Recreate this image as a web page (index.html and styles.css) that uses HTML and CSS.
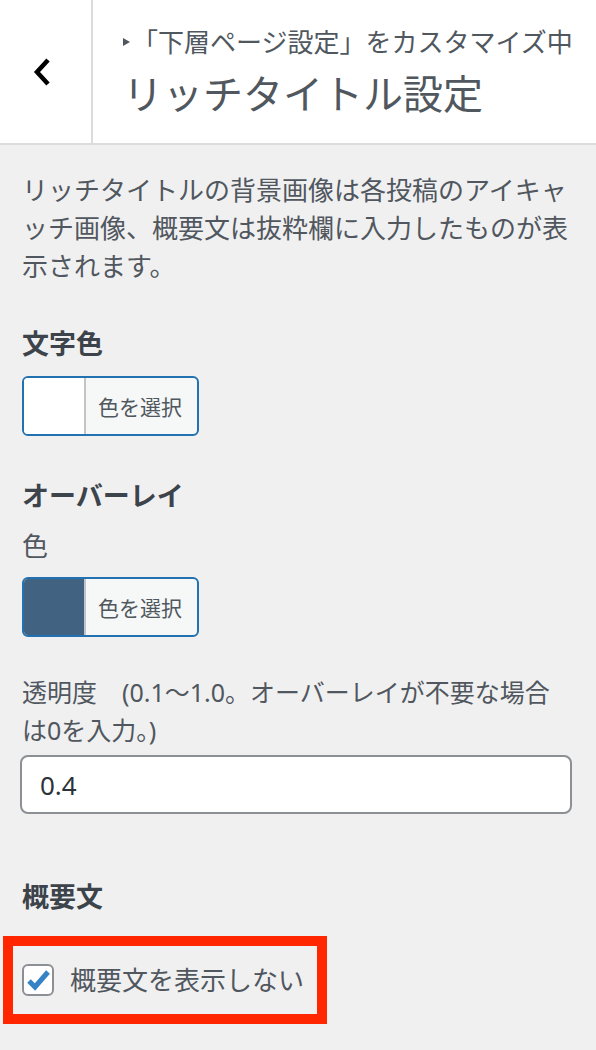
FILE: index.html
```html
<!DOCTYPE html>
<html lang="ja">
<head>
  <meta charset="UTF-8">
  <title>リッチタイトル設定</title>
  <link rel="stylesheet" href="styles.css">
</head>
<body>
  <div class="panel">
    <div class="panel-head">
      <button class="back" type="button" aria-label="戻る">
        <svg width="20" height="30" viewBox="0 0 20 30">
          <path d="M15 3 L4 15 L15 27" fill="none" stroke="#000" stroke-width="4.5"/>
        </svg>
      </button>
      <div class="head-text">
        <div class="crumb"><span class="tri"></span>「下層ページ設定」をカスタマイズ中</div>
        <h1>リッチタイトル設定</h1>
      </div>
    </div>

    <div class="panel-body">
      <p class="desc">リッチタイトルの背景画像は各投稿のアイキャッチ画像、概要文は抜粋欄に入力したものが表示されます。</p>

      <h2 class="control-title first">文字色</h2>
      <button class="color-btn" type="button">
        <span class="swatch" style="background:#ffffff"></span>
        <span class="pick">色を選択</span>
      </button>

      <h2 class="control-title">オーバーレイ</h2>
      <div class="sub-label">色</div>
      <button class="color-btn" type="button">
        <span class="swatch" style="background:#416280"></span>
        <span class="pick">色を選択</span>
      </button>

      <label class="field-label" for="opacity">透明度　(0.1〜1.0。オーバーレイが不要な場合は0を入力。)</label>
      <input class="text-input" id="opacity" type="text" value="0.4">

      <h2 class="control-title excerpt">概要文</h2>
      <div class="mark">
        <label class="check">
          <span class="box">
            <svg width="28" height="28" viewBox="0 0 28 28">
              <path d="M5 15 L11 21 L24 6" fill="none" stroke="#3582c4" stroke-width="5"/>
            </svg>
          </span>
          概要文を表示しない
        </label>
      </div>
    </div>
  </div>
</body>
</html>
```

FILE: styles.css
```css
* {
  box-sizing: border-box;
  margin: 0;
  padding: 0;
}

body {
  background: #f0f0f1;
  font-family: "Noto Sans", "Noto Sans CJK JP", sans-serif;
  color: #50575e;
}

.panel {
  width: 596px;
  min-height: 1050px;
}

/* header */
.panel-head {
  display: flex;
  height: 145px;
  background: #fff;
  border-bottom: 2px solid #dcdcde;
}

.back {
  width: 93px;
  border: none;
  border-right: 2px solid #dcdcde;
  background: #fff;
  display: flex;
  align-items: center;
  justify-content: center;
  padding-right: 6px;
}

.head-text {
  padding: 24px 0 0 30px;
}

.crumb {
  font-size: 26px;
  line-height: 36px;
  display: flex;
  align-items: center;
  white-space: nowrap;
}

.tri {
  width: 0;
  height: 0;
  border-left: 7px solid #50575e;
  border-top: 4px solid transparent;
  border-bottom: 4px solid transparent;
  margin-right: 2px;
}

.head-text h1 {
  margin-top: 9px;
  font-size: 40px;
  font-weight: 400;
  line-height: 50px;
}

/* body */
.panel-body {
  padding: 26px 24px 0 22px;
}

.desc {
  font-size: 26px;
  line-height: 38px;
}

.control-title {
  font-size: 27px;
  font-weight: 700;
  line-height: 38px;
  color: #3c434a;
  margin-top: 41px;
  margin-bottom: 12px;
}

.control-title.first {
  margin-top: 40px;
  margin-bottom: 13px;
}

.control-title.excerpt {
  margin-top: 64px;
  margin-bottom: 20px;
}

.sub-label {
  font-size: 26px;
  line-height: 38px;
  margin-bottom: 12px;
}

.color-btn {
  display: flex;
  width: 177px;
  height: 60px;
  border: 2px solid #2271b1;
  border-radius: 6px;
  overflow: hidden;
  background: #f6f7f7;
  font-family: inherit;
  color: #50575e;
  padding: 0;
}

.swatch {
  width: 62px;
  height: 100%;
  border-right: 2px solid #c3c4c7;
}

.pick {
  flex: 1;
  display: flex;
  align-items: center;
  padding-left: 12px;
  font-size: 21px;
}

.field-label {
  display: block;
  margin-top: 36px;
  font-size: 25px;
  line-height: 38px;
}

.text-input {
  display: block;
  margin: 6px 0 0 -2px;
  width: 552px;
  height: 59px;
  border: 2px solid #8c8f94;
  border-radius: 8px;
  background: #fff;
  padding: 0 18px;
  font-family: inherit;
  font-size: 26px;
  color: #2c3338;
}

/* annotation frame */
.mark {
  width: 324px;
  margin-left: -19px;
  border: 10px solid #ff2600;
  padding: 18px 0 18px 9px;
}

.check {
  display: flex;
  align-items: center;
  gap: 16px;
  font-size: 26px;
  line-height: 32px;
}

.box {
  width: 32px;
  height: 32px;
  border: 2px solid #8c8f94;
  border-radius: 6px;
  background: #fff;
  display: flex;
  align-items: center;
  justify-content: center;
}
```
